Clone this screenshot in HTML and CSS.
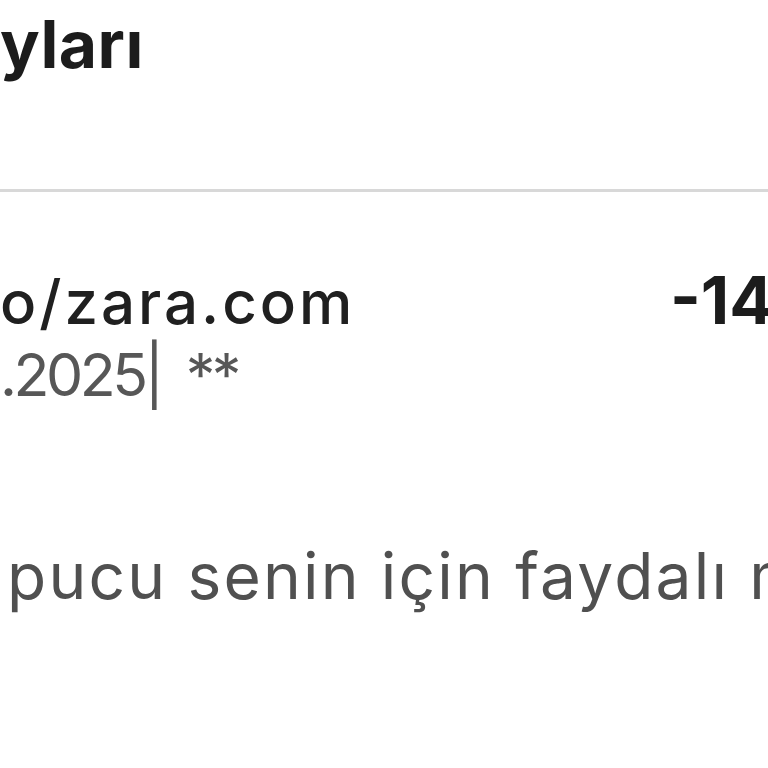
FILE: index.html
```html
<!DOCTYPE html>
<html lang="tr">
<head>
<meta charset="utf-8">
<title>İşlem Detayları</title>
<link rel="stylesheet" href="styles.css">
</head>
<body>
<main class="screen">
  <header class="head">
    <h1 class="title"><span class="clip"><span>İşlem Deta</span></span>yları</h1>
  </header>
  <hr class="divider">
  <section class="txn">
    <div class="txn-main">
      <div class="txn-name"><span class="clip"><span>iyzic</span></span>o/zara.com</div>
      <div class="txn-meta"><span class="clip"><span>12.05</span></span>.2025| **</div>
    </div>
    <div class="txn-amount">-149,90 TL</div>
  </section>
  <p class="tip"><span class="clip"><span>Bu i</span></span>pucu senin için faydalı mı?</p>
</main>
</body>
</html>
```

FILE: styles.css
```css
html, body {
  margin: 0;
  padding: 0;
  background: #ffffff;
  overflow: hidden;
}
.screen {
  width: 768px;
  height: 768px;
  overflow: hidden;
  font-family: "Inter", "Noto Sans", sans-serif;
  white-space: nowrap;
}
.clip {
  display: inline-flex;
  width: 0;
  justify-content: flex-end;
  white-space: nowrap;
}
.head {
  height: 189px;
  padding-top: 4px;
  box-sizing: border-box;
}
.title {
  margin: 0;
  font-size: 66px;
  line-height: 80px;
  font-weight: 700;
  color: #1c1c1c;
  letter-spacing: 0.5px;
}
.divider {
  margin: 0;
  border: 0;
  height: 3px;
  background: #d8d8d8;
}
.txn {
  display: flex;
  align-items: baseline;
  padding-top: 68px;
}
.txn-main {
  flex: 0 0 670px;
}
.txn-name {
  font-size: 60px;
  line-height: 72px;
  font-weight: 500;
  color: #202020;
  letter-spacing: 3px;
}
.txn-meta {
  font-size: 59px;
  line-height: 74px;
  font-weight: 400;
  color: #575757;
  letter-spacing: -3.5px;
  word-spacing: 12px;
}
.txn-amount {
  font-size: 66px;
  font-weight: 700;
  color: #1c1c1c;
}
.tip {
  margin: 124px 0 0;
  font-size: 64px;
  line-height: 80px;
  font-weight: 400;
  color: #505050;
  letter-spacing: 2.2px;
}
.tip .clip {
  margin-right: 7px;
}
```
